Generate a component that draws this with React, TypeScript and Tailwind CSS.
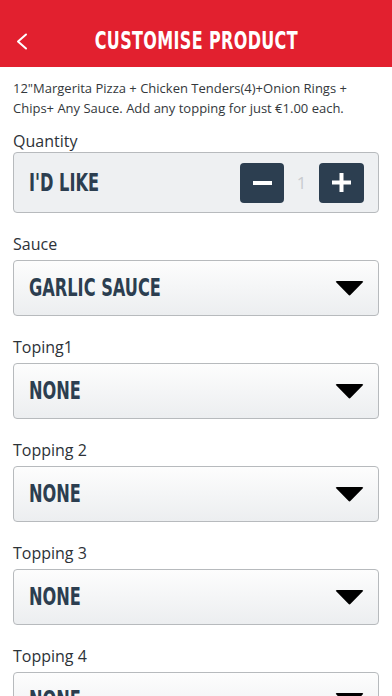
const cond = { fontFamily: '"DejaVu Sans Condensed", "DejaVu Sans", sans-serif' };

function Caret() {
  return (
    <svg width="29" height="16" viewBox="0 0 29 16">
      <path d="M2 1 H27 Q29 1 27.6 2.6 L15.6 14.8 Q14.5 16 13.4 14.8 L1.4 2.6 Q0 1 2 1 Z" fill="#000" />
    </svg>
  );
}

function SelectField({ label, value }: { label: string; value: string }) {
  return (
    <div className="mt-[21px]">
      <div className="mb-[6px] text-[16px] leading-5 text-[#2d3238]">{label}</div>
      <div className="flex h-[56px] items-center justify-between rounded-[4px] border border-[#b7babd] bg-gradient-to-b from-[#fdfdfd] to-[#eceef0] pl-[15px] pr-[14px]">
        <span
          className="inline-block origin-left scale-x-[0.75] text-[24px] font-bold text-[#2c3e50]"
          style={cond}
        >
          {value}
        </span>
        <Caret />
      </div>
    </div>
  );
}

export default function App() {
  return (
    <div
      className="h-[696px] w-full overflow-hidden bg-white"
      style={{ fontFamily: '"Open Sans", "Noto Sans", sans-serif' }}
    >
      {/* Header */}
      <header className="relative flex h-[67px] items-center justify-center bg-[#e2202f]">
        <svg className="absolute left-[15px] top-[33px]" width="13" height="17" viewBox="0 0 13 17">
          <polyline points="11,1.5 3,8.5 11,15.5" fill="none" stroke="#fff" strokeWidth="2" strokeLinecap="round" strokeLinejoin="round" />
        </svg>
        <h1
          className="mt-[14px] inline-block scale-x-[0.74] text-[24px] font-bold tracking-[0.5px] text-white"
          style={cond}
        >
          CUSTOMISE PRODUCT
        </h1>
      </header>

      <div className="px-[13px]">
        <p className="pt-[11px] text-[13px] leading-5 text-[#34383c]">
          12"Margerita Pizza + Chicken Tenders(4)+Onion Rings +<br />
          Chips+ Any Sauce. Add any topping for just €1.00 each.
        </p>

        {/* Quantity */}
        <div className="mt-[13px]">
          <div className="mb-px text-[16px] leading-5 text-[#2d3238]">Quantity</div>
          <div className="flex h-[61px] items-center justify-between rounded-[4px] border border-[#b7babd] bg-[#eef0f2] pl-[15px] pr-[14px]">
            <span
              className="inline-block origin-left scale-x-[0.75] text-[24px] font-bold text-[#2c3e50]"
              style={cond}
            >
              I'D LIKE
            </span>
            <div className="flex items-center">
              <button className="flex h-[40px] w-[44px] items-center justify-center rounded-[4px] bg-[#2c3e50]">
                <span className="block h-[4px] w-[19px] bg-white" />
              </button>
              <span className="w-[35px] text-center text-[17px] text-[#c8cbcf]">1</span>
              <button className="flex h-[40px] w-[45px] items-center justify-center rounded-[4px] bg-[#2c3e50]">
                <svg width="19" height="19" viewBox="0 0 19 19">
                  <rect x="0" y="7.5" width="19" height="4" fill="#fff" />
                  <rect x="7.5" y="0" width="4" height="19" fill="#fff" />
                </svg>
              </button>
            </div>
          </div>
        </div>

        <SelectField label="Sauce" value="GARLIC SAUCE" />
        <SelectField label="Toping1" value="NONE" />
        <SelectField label="Topping 2" value="NONE" />
        <SelectField label="Topping 3" value="NONE" />
        <SelectField label="Topping 4" value="NONE" />
      </div>
    </div>
  );
}
